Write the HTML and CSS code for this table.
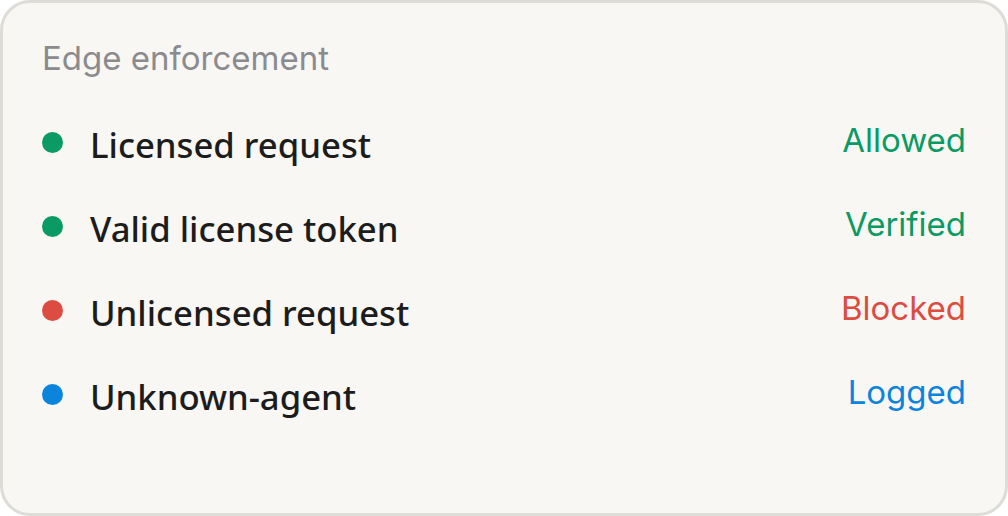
FILE: index.html
```html
<!DOCTYPE html>
<html lang="en">

<head>
  <meta charset="UTF-8" />
  <meta name="viewport" content="width=device-width, initial-scale=1.0" />
  <title>Edge enforcement</title>
  <link rel="stylesheet" href="styles.css">
</head>

<body>
  <main class="card">
    <h2 class="card_title">Edge enforcement</h2>
    <ul class="rule_list">
      <li class="rule">
        <span class="rule_dot rule_dot-ok"></span>
        <span class="rule_label">Licensed request</span>
        <span class="rule_status rule_status-ok">Allowed</span>
      </li>
      <li class="rule">
        <span class="rule_dot rule_dot-ok"></span>
        <span class="rule_label">Valid license token</span>
        <span class="rule_status rule_status-ok">Verified</span>
      </li>
      <li class="rule">
        <span class="rule_dot rule_dot-blocked"></span>
        <span class="rule_label">Unlicensed request</span>
        <span class="rule_status rule_status-blocked">Blocked</span>
      </li>
      <li class="rule">
        <span class="rule_dot rule_dot-logged"></span>
        <span class="rule_label">Unknown-agent</span>
        <span class="rule_status rule_status-logged">Logged</span>
      </li>
    </ul>
  </main>
</body>
</html>
```

FILE: styles.css
```css
html {
  box-sizing: border-box;
}

body {
  margin: 0;
  background: #fff;
  font-family: Inter, "Noto Sans", sans-serif;
}

.card {
  box-sizing: border-box;
  height: 516px;
  padding: 35px 39px 0 39px;
  background: #f8f7f4;
  border: solid 3px #dedcd6;
  border-radius: 30px;
}

.card_title {
  margin: 0 0 39px;
  font-size: 33px;
  font-weight: 400;
  line-height: 40px;
  color: #8b8b8e;
}

.rule_list {
  margin: 0;
  padding: 0;
  list-style: none;
}

.rule {
  display: flex;
  align-items: flex-start;
  height: 84px;
}

.rule_dot {
  flex: none;
  width: 21px;
  height: 21px;
  margin: 15px 27px 0 0;
  border-radius: 50%;
}

.rule_dot-ok {
  background: #0a9a64;
}

.rule_dot-blocked {
  background: #dc4c40;
}

.rule_dot-logged {
  background: #0b84dc;
}

.rule_label {
  flex: 1;
  font-family: "Noto Sans", sans-serif;
  font-size: 34.7px;
  font-weight: 500;
  line-height: 56px;
  color: #1c1c1c;
}

.rule_status {
  font-size: 33px;
  line-height: 46px;
}

.rule_status-ok {
  color: #0a9a64;
}

.rule_status-blocked {
  color: #dc4c40;
}

.rule_status-logged {
  color: #0b84dc;
}
```
